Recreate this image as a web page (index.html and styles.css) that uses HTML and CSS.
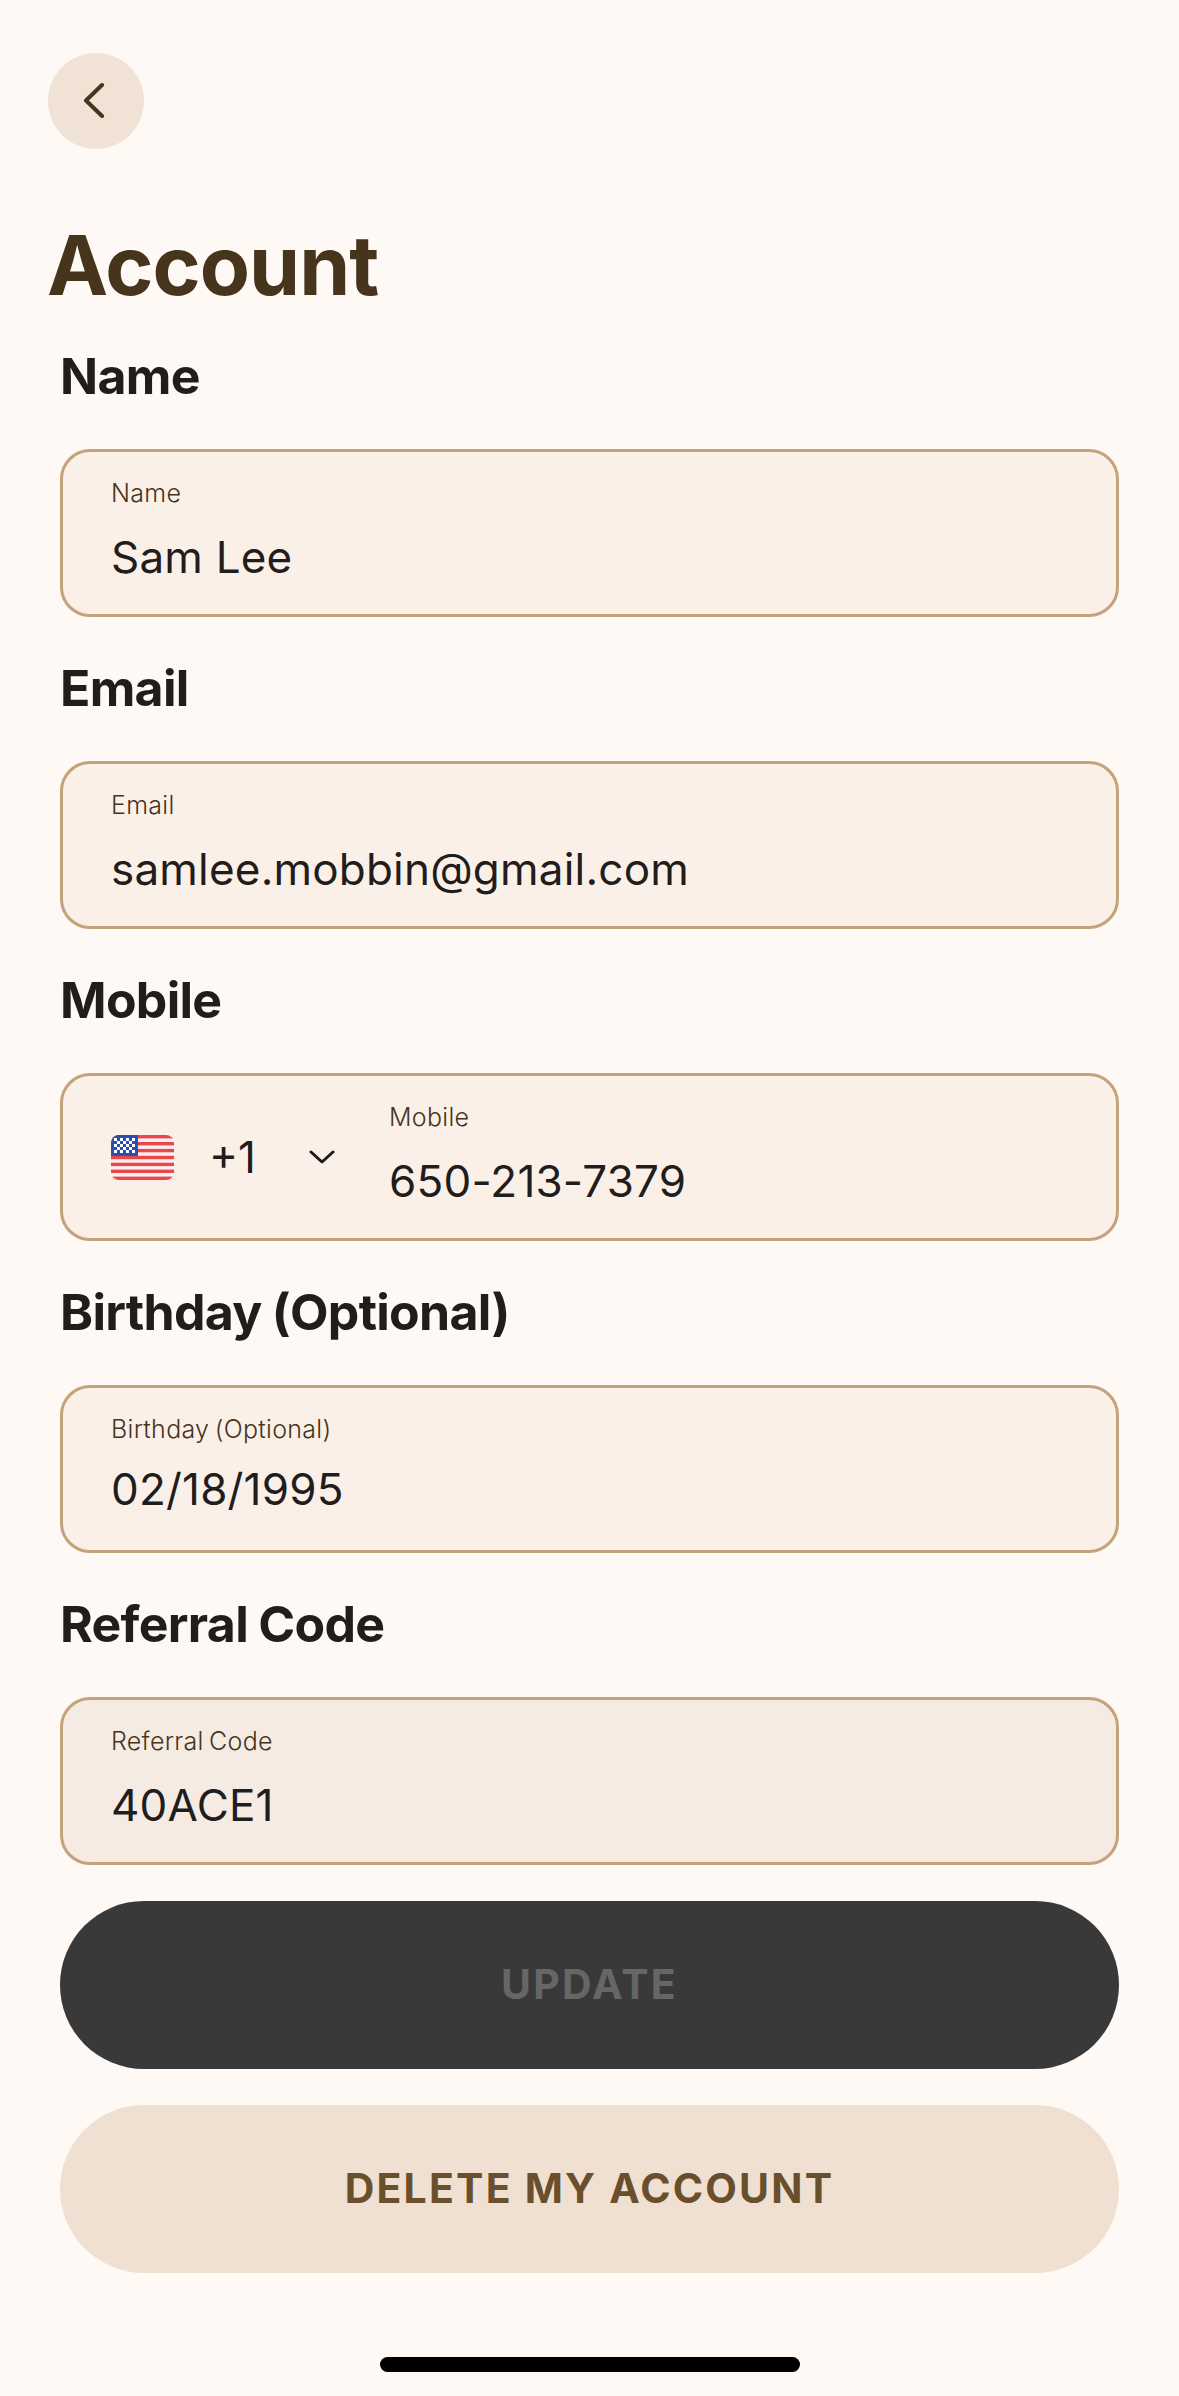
FILE: index.html
```html
<!DOCTYPE html>
<html lang="en">
<head>
  <meta charset="UTF-8" />
  <meta name="viewport" content="width=device-width, initial-scale=1" />
  <title>Account</title>
  <link rel="stylesheet" href="styles.css">
</head>
<body>

  <button class="back" type="button" aria-label="Back">
    <svg width="24" height="36" viewBox="0 0 24 36" fill="none" stroke="#46341c" stroke-width="4" stroke-linecap="round" stroke-linejoin="round">
      <path d="M19 2 L3 17.5 L19 33" />
    </svg>
  </button>

  <h1>Account</h1>

  <form class="account-form">
    <section class="group">
      <h2>Name</h2>
      <div class="field">
        <span class="field-label">Name</span>
        <span class="field-value">Sam Lee</span>
      </div>
    </section>

    <section class="group">
      <h2>Email</h2>
      <div class="field">
        <span class="field-label">Email</span>
        <span class="field-value">samlee.mobbin@gmail.com</span>
      </div>
    </section>

    <section class="group">
      <h2>Mobile</h2>
      <div class="field field-phone">
        <div class="country">
          <svg class="flag" width="63" height="45" viewBox="0 0 63 45">
            <defs>
              <clipPath id="flagClip"><rect width="63" height="45" rx="8" /></clipPath>
            </defs>
            <g clip-path="url(#flagClip)">
              <rect width="63" height="45" fill="#fbeeee" />
              <rect y="0" width="63" height="3.4" fill="#e8474c" />
              <rect y="7" width="63" height="3.4" fill="#e8474c" />
              <rect y="13.9" width="63" height="3.4" fill="#e8474c" />
              <rect y="20.8" width="63" height="3.4" fill="#e8474c" />
              <rect y="27.7" width="63" height="3.4" fill="#e8474c" />
              <rect y="34.6" width="63" height="3.4" fill="#e8474c" />
              <rect y="41.6" width="63" height="3.4" fill="#e8474c" />
              <rect width="27" height="21" fill="#2b4eb0" />
              <g fill="#fff">
                <rect x="3" y="3" width="3" height="3" /><rect x="9" y="3" width="3" height="3" /><rect x="15" y="3" width="3" height="3" /><rect x="21" y="3" width="3" height="3" />
                <rect x="6" y="6" width="3" height="3" /><rect x="12" y="6" width="3" height="3" /><rect x="18" y="6" width="3" height="3" />
                <rect x="3" y="9" width="3" height="3" /><rect x="9" y="9" width="3" height="3" /><rect x="15" y="9" width="3" height="3" /><rect x="21" y="9" width="3" height="3" />
                <rect x="6" y="12" width="3" height="3" /><rect x="12" y="12" width="3" height="3" /><rect x="18" y="12" width="3" height="3" />
                <rect x="3" y="15" width="3" height="3" /><rect x="9" y="15" width="3" height="3" /><rect x="15" y="15" width="3" height="3" /><rect x="21" y="15" width="3" height="3" />
              </g>
            </g>
          </svg>
          <span class="dial">+1</span>
          <svg class="chevron" width="26" height="14" viewBox="0 0 26 14" fill="none" stroke="#1c1a1a" stroke-width="3" stroke-linecap="round" stroke-linejoin="round">
            <path d="M2 2 L13 12 L24 2" />
          </svg>
        </div>
        <div class="phone-text">
          <span class="field-label">Mobile</span>
          <span class="field-value">650-213-7379</span>
        </div>
      </div>
    </section>

    <section class="group">
      <h2>Birthday (Optional)</h2>
      <div class="field field-date">
        <span class="field-label">Birthday (Optional)</span>
        <span class="field-value">02/18/1995</span>
      </div>
    </section>

    <section class="group group-last">
      <h2>Referral Code</h2>
      <div class="field field-locked">
        <span class="field-label">Referral Code</span>
        <span class="field-value">40ACE1</span>
      </div>
    </section>

    <button class="btn btn-update" type="button">UPDATE</button>
    <button class="btn btn-delete" type="button">DELETE MY ACCOUNT</button>
  </form>

  <div class="home-bar"></div>

</body>
</html>
```

FILE: styles.css
```css
* {
  box-sizing: border-box;
}
body {
  margin: 0;
  height: 2396px;
  padding-top: 53px;
  background-color: #fef9f5;
  font-family: Inter, "Liberation Sans", sans-serif;
  color: #211d1d;
  overflow: hidden;
}
.back {
  display: flex;
  align-items: center;
  justify-content: center;
  width: 96px;
  height: 96px;
  margin-left: 48px;
  padding: 0 3px 0 0;
  border: none;
  border-radius: 50%;
  background-color: #f0e2d4;
}
h1 {
  margin: 67px 0 30px 47px;
  font-size: 82px;
  line-height: 100px;
  font-weight: 700;
  letter-spacing: -1px;
  color: #46341c;
}
.account-form {
  display: flex;
  flex-direction: column;
  padding: 0 60px;
}
.group {
  margin-bottom: 41px;
}
.group-last {
  margin-bottom: 36px;
}
h2 {
  margin: 0 0 43px;
  font-size: 50px;
  line-height: 60px;
  font-weight: 700;
  letter-spacing: -0.7px;
  word-spacing: -1px;
}
.field {
  display: flex;
  flex-direction: column;
  height: 168px;
  padding: 26px 48px 0;
  border: 3px solid #c4a27c;
  border-radius: 30px;
  background-color: #fbf0e8;
}
.field-locked {
  background-color: #f6ebe2;
}
.field-label {
  display: block;
  font-size: 25px;
  line-height: 30px;
  font-weight: 300;
  letter-spacing: 0.3px;
  word-spacing: -2px;
  color: #46341c;
}
.field-value {
  display: block;
  margin-top: 24px;
  font-size: 44px;
  line-height: 50px;
  letter-spacing: 0.2px;
}
.field-date .field-value {
  margin-top: 20px;
}
.field-phone {
  flex-direction: row;
  align-items: stretch;
  padding-top: 0;
}
.country {
  display: flex;
  align-items: center;
  width: 278px;
}
.flag {
  flex-shrink: 0;
}
.dial {
  margin-left: 35px;
  font-size: 44px;
  line-height: 50px;
}
.chevron {
  margin-left: 53px;
}
.phone-text {
  padding-top: 26px;
}
.btn {
  display: block;
  width: 100%;
  height: 168px;
  padding-bottom: 3px;
  border: none;
  border-radius: 84px;
  font-family: inherit;
  font-size: 41px;
  font-weight: 700;
  letter-spacing: 2.2px;
}
.btn-update {
  background-color: #393939;
  color: #666666;
}
.btn-delete {
  margin-top: 36px;
  background-color: #f0e0d2;
  color: #6a4f2c;
}
.home-bar {
  width: 420px;
  height: 15px;
  margin: 84px 0 0 380px;
  border-radius: 8px;
  background-color: #000;
}
```
